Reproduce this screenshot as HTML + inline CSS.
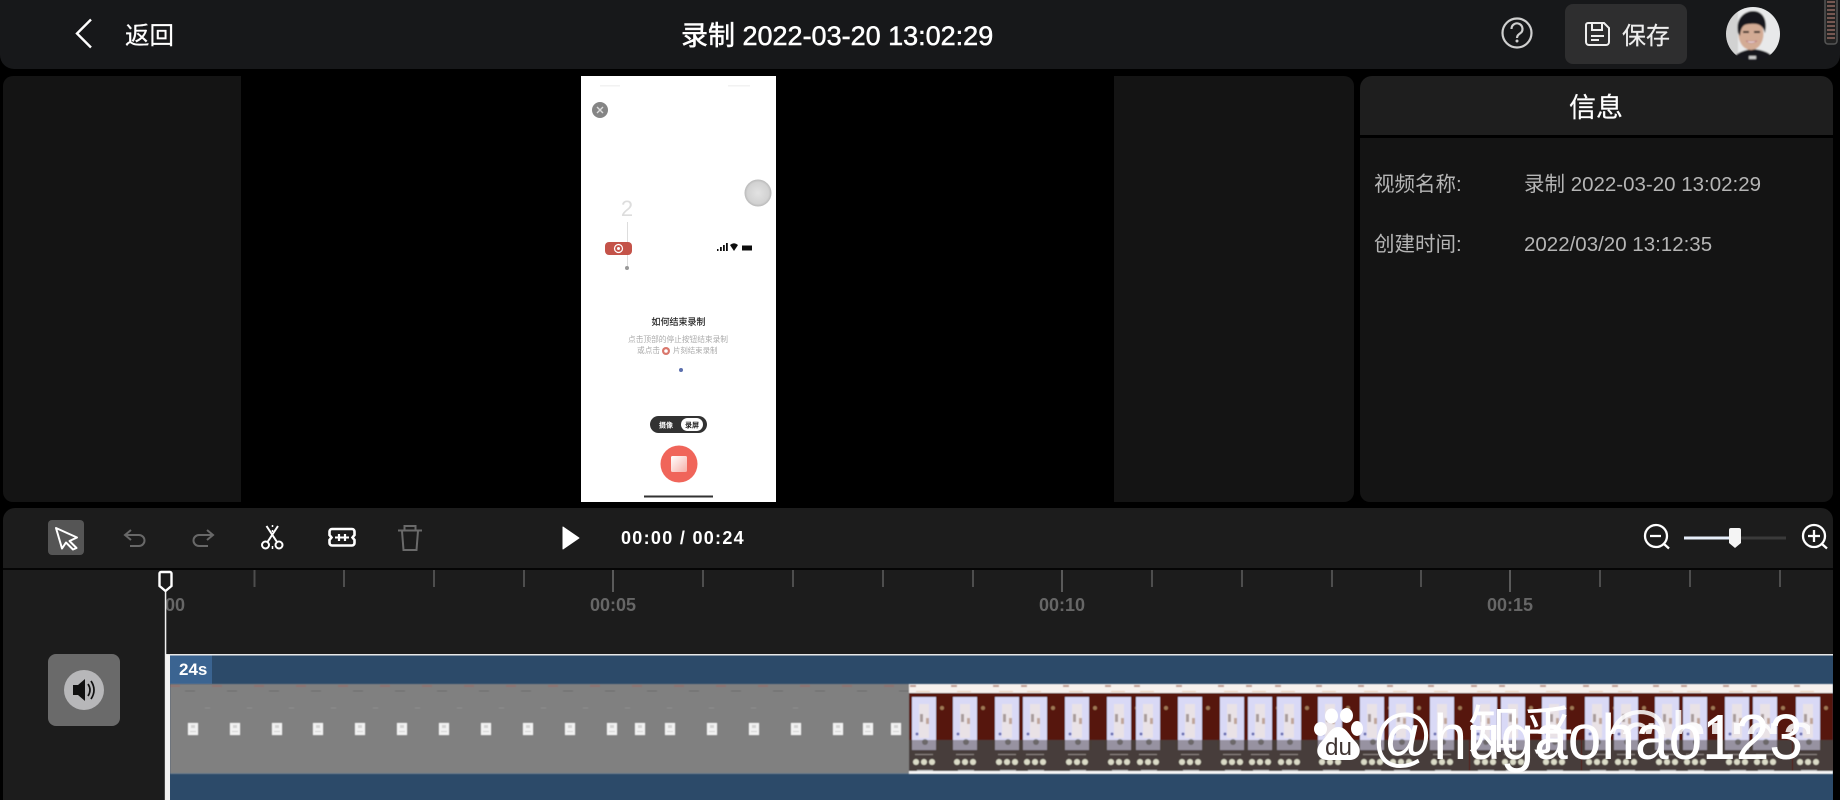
<!DOCTYPE html>
<html lang="zh">
<head>
<meta charset="utf-8">
<title>录制 2022-03-20 13:02:29</title>
<style>
html,body{margin:0;padding:0;background:#000;}
body{width:1840px;height:800px;overflow:hidden;position:relative;font-family:"Liberation Sans","Noto Sans CJK SC",sans-serif;}
div,span{position:absolute;white-space:nowrap;}
.lbl{color:#b5b5b5;font-size:20.5px;line-height:28px;}
.tk{color:#666;font-size:18px;font-weight:700;line-height:22px;}
.ph{filter:blur(.35px);}
svg{position:absolute;left:0;top:0;}
</style>
</head>
<body>
<!-- header -->
<div style="left:0;top:0;width:1840px;height:69px;background:#17181a;border-radius:0 0 14px 14px"></div>
<div style="left:125px;top:22px;color:#fff;font-size:24.5px;line-height:30px;-webkit-text-stroke:.2px #fff">返回</div>
<div style="left:681px;top:19px;color:#fff;font-size:27px;line-height:34px;-webkit-text-stroke:.5px #fff">录制 2022-03-20 13:02:29</div>
<div style="left:1565px;top:4px;width:122px;height:60px;background:#2e2e2f;border-radius:8px"></div>
<div style="left:1622px;top:21px;color:#eee;font-size:24px;line-height:32px;-webkit-text-stroke:.2px #eee">保存</div>

<!-- preview -->
<div style="left:3px;top:76px;width:238px;height:426px;background:#141414;border-radius:10px 0 0 10px"></div>
<div style="left:1114px;top:76px;width:240px;height:426px;background:#141414;border-radius:0 10px 10px 0"></div>
<div style="left:581px;top:76px;width:195px;height:426px;background:#fff"></div>

<!-- phone text -->
<div class="ph" style="left:581px;width:195px;top:196px;text-align:center;color:#ddd;font-size:22px;line-height:26px;text-indent:-103px">2</div>
<div class="ph" style="left:581px;width:195px;top:315px;text-align:center;color:#222;font-size:9px;line-height:14px;-webkit-text-stroke:.15px #222">如何结束录制</div>
<div class="ph" style="left:628px;top:334px;color:#aaa;font-size:7.7px;line-height:12px">点击顶部的停止按钮结束录制</div>
<div class="ph" style="left:637px;top:345px;color:#aaa;font-size:7.7px;line-height:12px">或点击</div>
<div class="ph" style="left:673px;top:345px;color:#aaa;font-size:7.4px;line-height:12px">片刻结束录制</div>

<!-- info panel -->
<div style="left:1360px;top:76px;width:473px;height:59px;background:#1e1e1e;border-radius:12px 12px 0 0"></div>
<div style="left:1360px;top:138px;width:473px;height:364px;background:#141414;border-radius:0 0 10px 10px"></div>
<div style="left:1569px;top:89px;color:#fff;font-size:27px;line-height:38px;-webkit-text-stroke:.2px #fff">信息</div>
<div class="lbl" style="left:1374px;top:171px">视频名称:</div>
<div class="lbl" style="left:1524px;top:171px">录制 2022-03-20 13:02:29</div>
<div class="lbl" style="left:1374px;top:231px">创建时间:</div>
<div class="lbl" style="left:1524px;top:231px">2022/03/20 13:12:35</div>

<!-- timeline -->
<div style="left:3px;top:508px;width:1830px;height:292px;background:#1c1c1c;border-radius:12px 12px 0 0"></div>
<div style="left:3px;top:568px;width:1830px;height:2px;background:#050505"></div>
<div style="left:48px;top:520px;width:36px;height:35px;background:#555;border-radius:4px"></div>
<div style="left:621px;top:526px;color:#fff;font-size:18px;line-height:24px;letter-spacing:1.3px;font-weight:700">00:00 / 00:24</div>
<div class="tk" style="left:165px;top:594px">00</div>
<div class="tk" style="left:590px;top:594px">00:05</div>
<div class="tk" style="left:1039px;top:594px">00:10</div>
<div class="tk" style="left:1487px;top:594px">00:15</div>
<div style="left:48px;top:654px;width:72px;height:72px;background:#6a6a6a;border-radius:8px"></div>
<div style="left:64px;top:670px;width:40px;height:40px;background:#b7b7b9;border-radius:50%"></div>

<svg width="1840" height="800" viewBox="0 0 1840 800" xmlns="http://www.w3.org/2000/svg">
<defs>
<g id="t">
<rect x="-3" y="56" width="42" height="31" fill="#463c3a"/>
<rect x="0" y="13" width="24" height="53" fill="#d9d9f6"/>
<rect x="7" y="20" width="10" height="34" fill="#e9e2e6"/>
<rect x="8" y="30" width="3" height="8" fill="#a89c9c"/>
<rect x="14" y="34" width="3" height="6" fill="#c0a69a"/>
<circle cx="5" cy="50" r="1.5" fill="#6a6fb0"/>
<circle cx="13" cy="58" r="3" fill="#8a8a90"/>
<rect x="-3" y="56" width="30" height="10" fill="#463c3a" opacity=".45"/>
<circle cx="4" cy="78" r="3" fill="#dcdcc8"/><circle cx="12" cy="78" r="3" fill="#dcdcc8"/><circle cx="20" cy="78" r="3" fill="#dcdcc8"/>
<rect x="3" y="70" width="18" height="1" fill="#8f8582"/>
<circle cx="30" cy="24" r="2" fill="#a07a55"/>
<rect x="4" y="7" width="14" height="1" fill="#e8cfb2"/>
<rect x="-2" y="1" width="6" height="2" fill="#c09a8e"/>
<rect x="5" y="86" width="16" height="1" fill="#b9b9b9"/>
</g>
<g id="g">
<rect width="10" height="12" fill="#f2f2f2"/>
<rect x="3" y="2" width="4" height="3" fill="#d2d2d2"/>
<rect x="2" y="8" width="6" height="1" fill="#cfcfcf"/>
</g>
<linearGradient id="sq" x1="0" y1="0" x2="1" y2="1"><stop offset="0" stop-color="#fff"/><stop offset="1" stop-color="#f6b0a8"/></linearGradient>
<radialGradient id="ball"><stop offset="0" stop-color="#e2e2e2"/><stop offset=".8" stop-color="#d2d2d2"/><stop offset="1" stop-color="#b8b8b8"/></radialGradient>
<clipPath id="wm"><rect x="1460" y="690" width="350" height="44"/></clipPath>
<clipPath id="av"><circle cx="1753" cy="34" r="27"/></clipPath>
<filter id="b1" x="-5%" y="-5%" width="110%" height="110%"><feGaussianBlur stdDeviation=".8"/></filter>
<filter id="b2" x="0" y="-5%" width="100%" height="110%"><feGaussianBlur stdDeviation=".45"/></filter>
<filter id="b3" x="-20%" y="-20%" width="140%" height="140%"><feGaussianBlur stdDeviation=".35"/></filter>
</defs>

<!-- header icons -->
<path d="M91 19.500 L77 33.500 L91 47.500" fill="none" stroke="#fff" stroke-width="2.400"/>
<circle cx="1517" cy="33" r="14.500" fill="none" stroke="#cfcfcf" stroke-width="2.200"/>
<path d="M1511.500 29 a5.500 5.500 0 1 1 8.600 4.400 c-2 1.400 -3.100 2.400 -3.100 4.600" fill="none" stroke="#cfcfcf" stroke-width="2.200"/>
<circle cx="1517" cy="41" r="1.500" fill="#cfcfcf"/>
<path d="M1588 23 H1604 L1609 28 V42 a3 3 0 0 1 -3 3 H1589 a3 3 0 0 1 -3 -3 V25 a2 2 0 0 1 2 -2 Z" fill="none" stroke="#eee" stroke-width="2"/>
<path d="M1592 23 V30 H1602 V23 M1591 36 H1604 M1591 40 H1599" fill="none" stroke="#eee" stroke-width="2"/>
<!-- avatar -->
<g clip-path="url(#av)">
<g filter="url(#b1)">
<rect x="1724" y="5" width="58" height="58" fill="#e8e9ea"/>
<rect x="1724" y="5" width="14" height="58" fill="#d2d2d2"/>
<path d="M1730 64 C1734 52 1745 50 1753 49 C1762 50 1773 52 1777 64 Z" fill="#15151a"/>
<ellipse cx="1751" cy="34" rx="12.500" ry="16" fill="#d3ab94"/>
<path d="M1738 33 C1735 17 1746 11 1753 11 C1763 11 1768 20 1765 33 C1763 25 1758 23 1750 24 C1744 24 1741 26 1740 36 Z" fill="#17171a"/>
<rect x="1743" y="31" width="6" height="2" fill="#2a221e"/><rect x="1754" y="31" width="6" height="2" fill="#2a221e"/>
<path d="M1746 41 Q1751 45 1757 41 Q1751 42 1746 41" fill="#fff" stroke="#a56" stroke-width=".5"/>
<rect x="1749" y="56" width="7" height="3" fill="#ccc"/>
</g>
</g>
<!-- top-right device -->
<rect x="1825" y="-4" width="12" height="48" rx="3" fill="#222" stroke="#555" stroke-width="1.500"/>
<path d="M1827 2H1835M1827 6H1835M1827 10H1835M1827 14H1835M1827 18H1835M1827 22H1835M1827 26H1835M1827 30H1835M1827 34H1835M1827 38H1835" stroke="#c98d82" stroke-width="1"/>

<!-- phone contents -->
<g filter="url(#b3)">
<circle cx="600" cy="110" r="8" fill="#858585"/>
<path d="M597 107 L603 113 M603 107 L597 113" stroke="#ddd" stroke-width="1.400"/>
<circle cx="758" cy="193" r="13.500" fill="url(#ball)"/>
<rect x="627" y="222" width="1" height="46" fill="#ddd"/>
<rect x="605" y="242" width="27" height="13" rx="4" fill="#c4524a"/>
<circle cx="618.500" cy="248.500" r="4" fill="none" stroke="#fff" stroke-width="1.200"/>
<circle cx="618.500" cy="248.500" r="1.500" fill="#fff"/>
<circle cx="627" cy="268" r="2" fill="#999"/>
<path d="M717 249h1.500v2H717zM720 247h1.800v4H720zM723 245h1.800v6H723zM726 243h1.800v8H726z" fill="#111"/>
<path d="M730 245 Q734 241.500 738 245 L734 251Z" fill="#111"/>
<rect x="742" y="245.500" width="10" height="5" fill="#111"/>
<rect x="600" y="85" width="20" height="1.500" fill="#f2f2f2"/><rect x="728" y="85" width="22" height="1.500" fill="#f2f2f2"/>
<circle cx="666" cy="351" r="4" fill="#d9776c"/><circle cx="666" cy="351" r="1.800" fill="#fff"/>
<circle cx="681" cy="370" r="2" fill="#5b6fae"/>
<rect x="650" y="416" width="57" height="17" rx="8.500" fill="#333"/>
<rect x="681" y="418" width="22" height="13" rx="6.500" fill="#fff"/>
<circle cx="679" cy="464" r="18.500" fill="#f0655a"/>
<rect x="671" y="456" width="16" height="16" rx="1.500" fill="url(#sq)"/>
<rect x="644" y="495.500" width="69" height="2" fill="#333"/>
</g>

<!-- toolbar icons -->
<path d="M56 528 L77 537.500 L69.500 541 L76.500 548 L73 549.500 L66 542.500 L62 548.500 Z" fill="none" stroke="#fff" stroke-width="2" stroke-linejoin="round"/>
<path d="M131 530 L125 535 L131 540 M125 535 H139 a5.500 5.500 0 0 1 0 11 H130" fill="none" stroke="#686868" stroke-width="2"/>
<path d="M207 530 L213 535 L207 540 M213 535 H199 a5.500 5.500 0 0 0 0 11 H208" fill="none" stroke="#686868" stroke-width="2"/>
<circle cx="265.500" cy="545" r="3.500" fill="none" stroke="#fff" stroke-width="2"/>
<circle cx="279" cy="545" r="3.500" fill="none" stroke="#fff" stroke-width="2"/>
<path d="M267.500 542 L278 526 M277 542 L266.500 526" stroke="#fff" stroke-width="2" fill="none"/>
<path d="M272.500 525v2M272.500 530v2M272.500 546v3" stroke="#fff" stroke-width="1.500"/>
<path d="M332 529 H352 a2.500 2.500 0 0 1 2.500 2.500 V535 L352.500 537.500 L354.500 540 V543 a2.500 2.500 0 0 1 -2.500 2.500 H332 a2.500 2.500 0 0 1 -2.500 -2.500 V540 L331.500 537.500 L329.500 535 V531.500 a2.500 2.500 0 0 1 2.500 -2.500 Z" fill="none" stroke="#fff" stroke-width="2.600"/>
<path d="M335 537.500 H349" stroke="#fff" stroke-width="2"/>
<path d="M339 534 V541 M345 534 V541" stroke="#fff" stroke-width="2.200"/>
<path d="M398 530.500 H422 M404.500 530 V526 H415.500 V530 M402 531 L403.500 550 H416.500 L418 531" fill="none" stroke="#6a6a6a" stroke-width="2"/>
<path d="M563 527 L579 538 L563 549 Z" fill="#fff" stroke="#fff" stroke-width="1" stroke-linejoin="round"/>

<!-- zoom -->
<circle cx="1656" cy="536" r="11" fill="none" stroke="#fff" stroke-width="2.300"/>
<path d="M1664 544 L1669 548.500 M1650 536 H1661" stroke="#fff" stroke-width="2.300"/>
<circle cx="1814" cy="536" r="11" fill="none" stroke="#fff" stroke-width="2.300"/>
<path d="M1822 544 L1827 548.500 M1808 536 H1820 M1814 530 V542" stroke="#fff" stroke-width="2.300"/>
<rect x="1684" y="536.500" width="102" height="3" fill="#3a3a3a"/>
<rect x="1684" y="536.500" width="50" height="3" fill="#e6eefa"/>
<path d="M1731 528 H1739 a2 2 0 0 1 2 2 V543 L1735 548 L1729 543 V530 a2 2 0 0 1 2 -2 Z" fill="#f4f4f4"/>

<!-- ticks -->
<path d="M254.500 570v17M344 570v17M434 570v17M524 570v17M703 570v17M793 570v17M883 570v17M973 570v17M1152 570v17M1242 570v17M1332 570v17M1421 570v17M1600 570v17M1690 570v17M1780 570v17" stroke="#4d4d4d" stroke-width="2"/>
<path d="M613 570v22M1062 570v22M1510 570v22" stroke="#5a5a5a" stroke-width="2"/>

<!-- speaker -->
<path d="M73 685 H78 L85 679 V701 L78 695 H73 Z" fill="#111"/>
<path d="M88 684 Q92 690 88 696 M91 681 Q97 690 91 699" fill="none" stroke="#111" stroke-width="1.700"/>

<!-- track -->
<rect x="170" y="655" width="1663" height="145" fill="#2c4a69"/>
<rect x="170" y="655" width="42" height="29" fill="#3b6491"/>
<g filter="url(#b2)">
<rect x="170" y="684" width="739" height="89" fill="#808080"/>
<path d="M170 686H909" stroke="#8f7371" stroke-width="2" stroke-dasharray="10 32"/>
<path d="M185 691H909" stroke="#6c6c6c" stroke-width="1" stroke-dasharray="10 32"/>
<path d="M205 708H800" stroke="#8f8f8f" stroke-width="1" stroke-dasharray="5 37"/>
<rect x="170" y="773" width="739" height="1" fill="#6f7e8d"/>
<use href="#g" x="188" y="723"/><use href="#g" x="230" y="723"/><use href="#g" x="272" y="723"/><use href="#g" x="313" y="723"/><use href="#g" x="355" y="723"/><use href="#g" x="397" y="723"/><use href="#g" x="439" y="723"/><use href="#g" x="481" y="723"/><use href="#g" x="523" y="723"/><use href="#g" x="565" y="723"/><use href="#g" x="607" y="723"/><use href="#g" x="635" y="723"/><use href="#g" x="665" y="723"/><use href="#g" x="707" y="723"/><use href="#g" x="749" y="723"/><use href="#g" x="791" y="723"/><use href="#g" x="833" y="723"/><use href="#g" x="863" y="723"/><use href="#g" x="891" y="723"/>
<rect x="909" y="684" width="924" height="90" fill="#57130f"/>
<rect x="909" y="684" width="924" height="9" fill="#f6f1ee"/>
<use href="#t" x="912" y="684"/><use href="#t" x="953" y="684"/><use href="#t" x="995" y="684"/><use href="#t" x="1023" y="684"/><use href="#t" x="1065" y="684"/><use href="#t" x="1107" y="684"/><use href="#t" x="1136" y="684"/><use href="#t" x="1178" y="684"/><use href="#t" x="1220" y="684"/><use href="#t" x="1248" y="684"/><use href="#t" x="1277" y="684"/><use href="#t" x="1318" y="684"/><use href="#t" x="1360" y="684"/><use href="#t" x="1389" y="684"/><use href="#t" x="1430" y="684"/><use href="#t" x="1473" y="684"/><use href="#t" x="1501" y="684"/><use href="#t" x="1542" y="684"/><use href="#t" x="1585" y="684"/><use href="#t" x="1614" y="684"/><use href="#t" x="1655" y="684"/><use href="#t" x="1683" y="684"/><use href="#t" x="1725" y="684"/><use href="#t" x="1753" y="684"/><use href="#t" x="1796" y="684"/>
<rect x="909" y="771" width="924" height="3" fill="#f6f6f6"/>
</g>
<rect x="1833" y="655" width="7" height="145" fill="#000"/>
<!-- track frame & playhead -->
<rect x="166" y="654" width="1667" height="1.500" fill="#e8e8e8"/>
<rect x="166" y="655" width="4" height="145" fill="#f2f2f2"/>
<rect x="164.800" y="590" width="1.500" height="210" fill="#f0f0f0"/>
<path d="M161 572 H170 a1.500 1.500 0 0 1 1.500 1.500 V586 L165.500 591 L159.500 586 V573.500 A1.500 1.500 0 0 1 161 572 Z" fill="#1c1c1c" stroke="#fff" stroke-width="2.400"/>

<!-- watermark -->
<g fill="#fff">
<ellipse cx="1320.500" cy="729" rx="6.500" ry="7"/><ellipse cx="1331.500" cy="716" rx="6.500" ry="7.500"/><ellipse cx="1346.500" cy="715.500" rx="6.500" ry="7.500"/><ellipse cx="1357" cy="728.500" rx="6" ry="7.500"/>
<path d="M1338.500 727 C1346 727 1349 735 1355 741 C1364 750 1359 760 1350 760 H1327 C1318 760 1313 750 1322 741 C1328 735 1331 727 1338.500 727 Z"/>
</g>
<text x="1325" y="755" font-family="'Liberation Sans',sans-serif" font-size="24" fill="#3f3432" textLength="27" lengthAdjust="spacingAndGlyphs">du</text>
<text x="1604" y="758" font-family="'Liberation Sans',sans-serif" font-size="66" fill="#fff" opacity=".85" clip-path="url(#wm)">@hugaoh</text>
<text x="1372" y="759" font-family="'Liberation Sans',sans-serif" font-size="64" fill="#fff" textLength="431" lengthAdjust="spacingAndGlyphs">@hugaohao123</text>
<text x="1468" y="749" font-family="'Liberation Sans','Noto Sans CJK SC',sans-serif" font-size="53" fill="#fff">知乎</text>

<text x="179" y="675" font-family="'Liberation Sans',sans-serif" font-size="17" font-weight="700" fill="#fff">24s</text>
<text x="659" y="427.500" font-family="'Liberation Sans','Noto Sans CJK SC',sans-serif" font-size="7" font-weight="700" fill="#fff">摄像</text>
<text x="685" y="427.500" font-family="'Liberation Sans','Noto Sans CJK SC',sans-serif" font-size="7" font-weight="700" fill="#222">录屏</text>
</svg>
</body>
</html>
